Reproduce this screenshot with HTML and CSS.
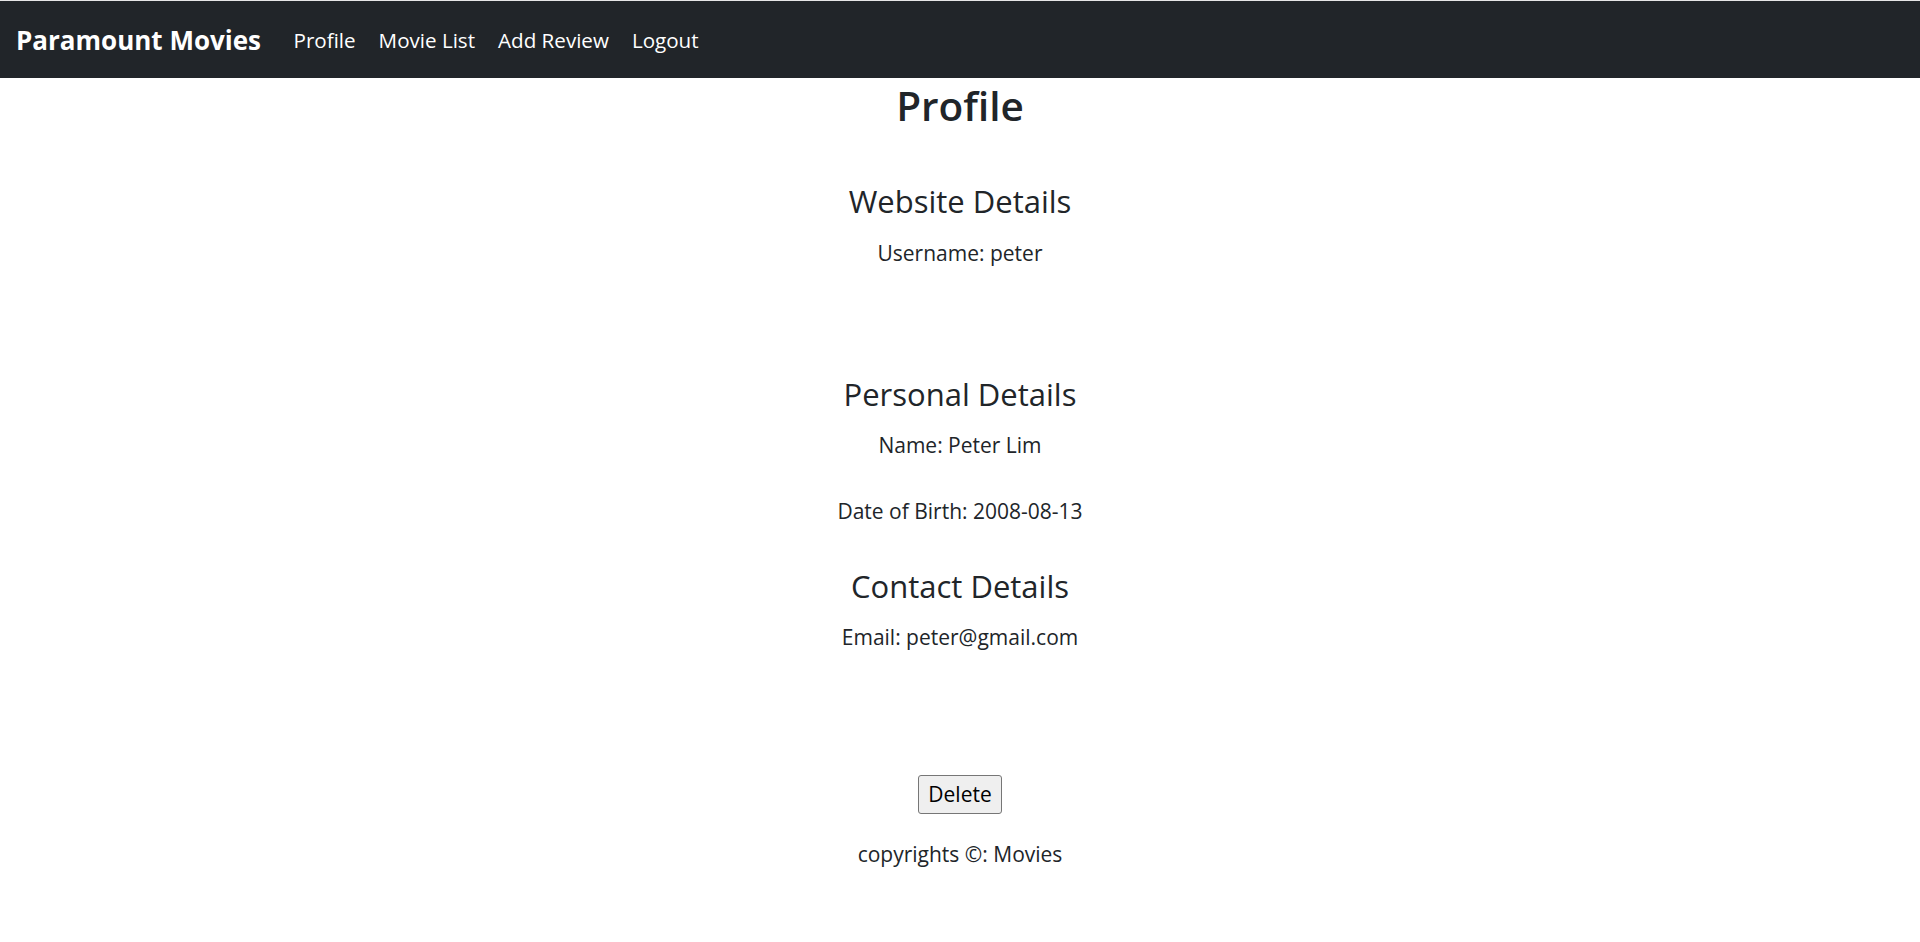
FILE: index.html
```html
<!DOCTYPE html>
<html lang="en">
<head>
<meta charset="utf-8">
<title>Profile</title>
<link rel="stylesheet" href="styles.css">
</head>
<body>
<nav class="navbar">
  <a class="brand" href="#">Paramount Movies</a>
  <ul class="nav-links">
    <li><a href="#">Profile</a></li>
    <li><a href="#">Movie List</a></li>
    <li><a href="#">Add Review</a></li>
    <li><a href="#">Logout</a></li>
  </ul>
</nav>
<main class="content">
  <h1 class="title">Profile</h1>
  <section class="section section-website">
    <h4>Website Details</h4>
    <p>Username: peter</p>
  </section>
  <section class="section section-personal">
    <h4>Personal Details</h4>
    <p>Name: Peter Lim</p>
    <p>Date of Birth: 2008-08-13</p>
  </section>
  <section class="section section-contact">
    <h4>Contact Details</h4>
    <p>Email: peter@gmail.com</p>
  </section>
  <button class="delete-btn" type="button">Delete</button>
  <footer class="footer">copyrights ©: Movies</footer>
</main>
</body>
</html>
```
FILE: styles.css
```css
html, body {
  margin: 0;
  padding: 0;
}
body {
  border-top: 1px solid #e6e6e6;
  font-family: "Open Sans", "Noto Sans", sans-serif;
  color: #212529;
  background: #fff;
}
.navbar {
  height: 77px;
  background: #212529;
  display: flex;
  align-items: center;
  padding: 0 16px;
}
.brand {
  color: #fff;
  text-decoration: none;
  font-size: 26px;
  font-weight: 700;
  margin-right: 21px;
}
.nav-links {
  list-style: none;
  margin: 0;
  padding: 0;
  display: flex;
}
.nav-links a {
  display: block;
  color: #fff;
  text-decoration: none;
  font-size: 20.6px;
  padding: 0 11.5px;
}
.content {
  display: flex;
  flex-direction: column;
  align-items: center;
  text-align: center;
}
.title {
  font-size: 40.5px;
  line-height: 50px;
  font-weight: 600;
  margin: 3px 0 52px;
}
.section {
  display: flex;
  flex-direction: column;
  align-items: center;
}
.section h4 {
  font-size: 31px;
  line-height: 36px;
  font-weight: 400;
  margin: 0 0 18.5px;
}
.section p {
  font-size: 21px;
  line-height: 30px;
  margin: 0;
}
.section p + p {
  margin-top: 36px;
}
.section-website { margin-bottom: 108px; }
.section-personal { margin-bottom: 41.5px; }
.section-contact { margin-bottom: 122.5px; }
.delete-btn {
  font-family: inherit;
  font-size: 21px;
  line-height: 27px;
  color: #000;
  background: #efefef;
  border: 1px solid #767676;
  border-radius: 3px;
  padding: 5px 9px;
  margin: 0 0 25px;
}
.footer {
  font-size: 21px;
  line-height: 30px;
}
```
